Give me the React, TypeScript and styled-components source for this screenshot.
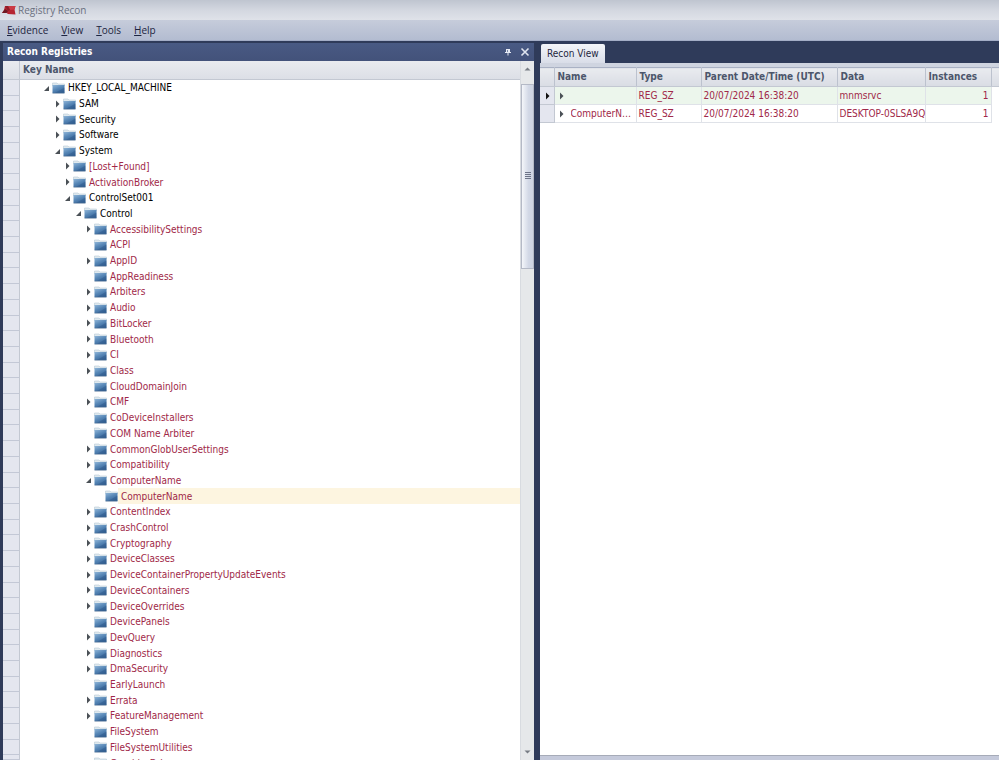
import React, { useState } from "react";
import styled, { createGlobalStyle } from "styled-components";

const uiFont = '"DejaVu Sans Condensed", "DejaVu Sans", sans-serif';
const menuFont = '"Open Sans", "Noto Sans", sans-serif';
const navy = "#2f3b5a";
const crimson = "#a02848";

const GlobalStyle = createGlobalStyle`
  * { box-sizing: border-box; }
  html, body, #root { height: 100%; margin: 0; }
  body { background: ${navy}; font-family: ${uiFont}; font-size: 10px; color: #000; overflow: hidden; }
  button { font: inherit; color: inherit; padding: 0; border: 0; background: none; cursor: pointer; }
`;

const Window = styled.div`
  display: flex;
  flex-direction: column;
  height: 100vh;
`;

const TitleBar = styled.header`
  display: flex;
  align-items: center;
  gap: 2px;
  flex: none;
  height: 20px;
  padding-left: 1px;
  background: linear-gradient(#bfc5d0, #d3d7e0 50%, #dfe2e9);
`;

const AppTitle = styled.h1`
  margin: 0;
  font: 400 10px/16px ${menuFont};
  color: #6b7080;
`;

const MenuBar = styled.nav`
  display: flex;
  align-items: center;
  gap: 13px;
  flex: none;
  height: 21px;
  padding-left: 7px;
  background: linear-gradient(#c6ccdb, #b3bcd1);
  border-bottom: 1px solid #a3adc6;
`;

const MenuButton = styled.button`
  font: 400 10px/16px ${menuFont};
  color: #1d2440;

  &::first-letter { text-decoration: underline; }
`;

const Workspace = styled.main`
  display: grid;
  grid-template-columns: minmax(0, 531fr) minmax(0, 459fr);
  gap: 6px;
  flex: 1;
  min-height: 0;
  padding: 2px 0 0 3px;
`;

const Panel = styled.section`
  display: flex;
  flex-direction: column;
  min-width: 0;
  min-height: 0;
`;

const PanelTitle = styled.div`
  display: flex;
  align-items: center;
  gap: 8px;
  flex: none;
  height: 18px;
  padding: 0 4px;
  background: linear-gradient(#495a84, #43527a);
  color: #fff;
`;

const PanelHeading = styled.h2`
  flex: 1;
  margin: 0;
  font: 700 10px/16px ${uiFont};
`;

const IconButton = styled.button`
  display: flex;
`;

const PanelBody = styled.div`
  display: flex;
  flex: 1;
  min-height: 0;
  background: #fff;
`;

const TreeArea = styled.div`
  display: flex;
  flex-direction: column;
  flex: 1;
  min-width: 0;
`;

const TreeHeader = styled.div`
  display: flex;
  flex: none;
  height: 19px;
  background: linear-gradient(#e9ebef, #dcdfe6);
  border-bottom: 1px solid #c3c8d2;
  color: #4c566b;
  font: 700 10px/18px ${uiFont};
`;

const HeaderCorner = styled.div`
  width: 17px;
  border-right: 1px solid #c3c8d2;
`;

const HeaderLabel = styled.div`
  flex: 1;
  padding-left: 3px;
`;

const TreeList = styled.ul`
  display: flex;
  flex-direction: column;
  flex: 1;
  min-height: 0;
  margin: 0;
  padding: 0;
  list-style: none;
`;

const TreeRow = styled.li<{ $cut?: boolean }>`
  display: flex;
  flex: ${(p) => (p.$cut ? "0 0 5px" : "1 1 0")};
  min-height: 0;
  overflow: ${(p) => (p.$cut ? "hidden" : "visible")};
`;

const RowIndicator = styled.span`
  flex: none;
  width: 17px;
  background: #e4e6ef;
  border-right: 1px solid #c3c8d2;
  border-bottom: 1px solid #c3c8d6;
`;

const RowContent = styled.div<{ $level: number; $cut?: boolean }>`
  display: flex;
  align-items: center;
  flex: 1;
  min-width: 0;
  min-height: ${(p) => (p.$cut ? "16px" : "0")};
  padding-left: ${(p) => 22 + p.$level * 10 + Math.ceil(p.$level / 2)}px;
`;

const Expander = styled.button`
  display: flex;
  flex: none;
  width: 10px;
  height: 10px;
`;

const ExpanderSpace = styled.span`
  flex: none;
  width: 10px;
`;

const KeyButton = styled.button<{ $recovered: boolean }>`
  display: flex;
  align-items: center;
  align-self: stretch;
  flex: 1;
  line-height: 15px;
  text-align: left;
  white-space: nowrap;
  color: ${(p) => (p.$recovered ? crimson : "#000")};
`;

const KeyLabel = styled.span<{ $selected: boolean }>`
  display: flex;
  align-items: center;
  align-self: stretch;
  flex: 1;
  padding-left: 3px;
  background: ${(p) => (p.$selected ? "#fdf5e0" : "transparent")};
`;

const Scrollbar = styled.div`
  display: flex;
  flex-direction: column;
  flex: none;
  width: 14px;
  background: #e6e8ea;
  border-left: 1px solid #d8dbe0;
`;

const ScrollButton = styled.button`
  display: flex;
  align-items: center;
  justify-content: center;
  flex: none;
  height: 16px;
`;

const ScrollTrack = styled.div`
  display: flex;
  flex-direction: column;
  flex: 1;
  padding-top: 7px;
`;

const ScrollThumb = styled.div`
  display: flex;
  align-items: center;
  justify-content: center;
  flex: 0 0 28%;
  background: linear-gradient(90deg, #f4f6fa, #d2d8e6 60%, #cdd3e2);
  border: 1px solid #b4b9c6;
`;

const TabStrip = styled.div`
  display: flex;
  align-items: flex-end;
  flex: none;
  height: 20px;
  padding-left: 1px;
`;

const Tab = styled.button`
  height: 19px;
  padding: 0 6px;
  background: linear-gradient(#f3f5f9, #d9dde8);
  border-radius: 2px 2px 0 0;
  line-height: 19px;
  color: #1f2740;
`;

const TabPage = styled.div`
  flex: 1;
  min-height: 0;
  background: #fff;
  border-top: 4px solid #cfd4e0;
  border-bottom: 4px solid #c5cadb;
`;

const PageBody = styled.div`
  height: 100%;
  border-bottom: 1px solid #a6abb8;
`;

const ValueTable = styled.table`
  width: 100%;
  border-collapse: collapse;
  table-layout: fixed;
  border-top: 1px solid #a9b1c4;
`;

const Column = styled.col<{ $width?: number }>`
  width: ${(p) => (p.$width ? `${p.$width}px` : "auto")};
`;

const HeadCell = styled.th`
  height: 19px;
  padding: 0 3px;
  background: linear-gradient(#e9ebef, #d9dce4);
  border-right: 1px solid #bcc2ce;
  border-bottom: 1px solid #c3c8d2;
  font: 700 10px/16px ${uiFont};
  color: #4c566b;
  text-align: left;
  white-space: nowrap;

  &:last-child { border-right: 0; }
`;

const ValueRow = styled.tr<{ $focused?: boolean }>`
  height: 18px;
  background: ${(p) => (p.$focused ? "#ecf6ec" : "#fff")};
`;

const Cell = styled.td<{ $right?: boolean }>`
  padding: ${(p) => (p.$right ? "0 2px" : "0 0 0 2px")};
  border-right: 1px solid #dfe2e8;
  border-bottom: 1px solid #dfe2e8;
  line-height: 16px;
  color: ${crimson};
  text-align: ${(p) => (p.$right ? "right" : "left")};
  white-space: nowrap;
`;

const MarkerCell = styled.td`
  padding: 0 0 0 3px;
  background: #e4e6ef;
  border-right: 1px solid #c3c8d2;
  border-bottom: 1px solid #c3c8d2;

  svg { display: block; }
`;

const FillerCell = styled.td`
  padding: 0;
  background: #fff;
`;

const NameContent = styled.div`
  display: flex;
  align-items: center;
  gap: 4px;
  padding-right: 4px;
`;

const NameText = styled.span`
  flex: 1;
  min-width: 0;
  overflow: hidden;
  text-overflow: ellipsis;
`;

const Logo = () => (
  <svg width="15" height="12" viewBox="0 0 15 12" aria-hidden="true">
    <path d="M1 9 L3 6 L4 2 L14.500 2 L13.500 5.500 L14.500 10.500 L7 10 L5 8.500 Z" fill="#b52432" />
    <path d="M1 9 L4 5 L7 7 L5.500 9 Z" fill="#6e1822" />
    <path d="M7 2 L14.500 2 L13.500 5.500 L9 6 Z" fill="#cb3a44" />
    <path d="M4 2 L7 2 L9 6 L7 7 Z" fill="#8f1e2a" />
  </svg>
);

const Folder = () => (
  <svg width="13" height="12" viewBox="0 0 13 12" aria-hidden="true">
    <defs>
      <linearGradient id="folderFace" x1="0" y1="0" x2="0.600" y2="1">
        <stop offset="0" stopColor="#8fb5d8" />
        <stop offset="0.550" stopColor="#5585b5" />
        <stop offset="1" stopColor="#3a6799" />
      </linearGradient>
    </defs>
    <path d="M0.500 3 V1 H5 L6 2 H12.500 V4 H0.500 Z" fill="#dfe9ee" stroke="#b9cbd6" strokeWidth="0.600" />
    <rect x="0.500" y="3" width="12" height="8" fill="url(#folderFace)" />
    <path d="M3 11 L12.500 5.500 V11 Z" fill="#244f85" opacity="0.350" />
    <path d="M0.500 11.200 H12.500" stroke="#4d6f93" strokeWidth="0.700" />
  </svg>
);

const ClosedArrow = ({ dark = false }: { dark?: boolean }) => (
  <svg width="10" height="10" viewBox="0 0 10 10" aria-hidden="true">
    <path d="M3 1.500 L6.500 5 L3 8.500 Z" fill={dark ? "#111" : "#4a5056"} />
  </svg>
);

const OpenArrow = () => (
  <svg width="10" height="10" viewBox="0 0 10 10" aria-hidden="true">
    <path d="M7 3 V8 H2 Z" fill="#4a5056" />
  </svg>
);

const Pin = () => (
  <svg width="8" height="8" viewBox="0 0 8 8" aria-hidden="true">
    <path d="M2 1 H6 V4 H7 V5 H1 V4 H2 Z M3.500 5 H4.500 V7.500 H3.500 Z" fill="#e6eaf4" />
    <path d="M3 2 H4 V4 H3 Z" fill="#7c89a8" />
  </svg>
);

const Close = () => (
  <svg width="10" height="10" viewBox="0 0 10 10" aria-hidden="true">
    <path d="M1.500 1.500 L8.500 8.500 M8.500 1.500 L1.500 8.500" stroke="#dfe4ef" strokeWidth="1.600" />
  </svg>
);

const ScrollArrow = ({ up = false }: { up?: boolean }) => (
  <svg width="7" height="4" viewBox="0 0 7 4" aria-hidden="true">
    <path d={up ? "M0.500 3.500 L3.500 0.500 L6.500 3.500 Z" : "M0.500 0.500 L3.500 3.500 L6.500 0.500 Z"} fill="#777c84" />
  </svg>
);

const Grip = () => (
  <svg width="6" height="8" viewBox="0 0 6 8" shapeRendering="crispEdges" aria-hidden="true">
    <path d="M0 0 H6 V1 H0 Z M0 2 H6 V3 H0 Z M0 4 H6 V5 H0 Z M0 6 H6 V7 H0 Z" fill="#6d7488" />
  </svg>
);

type Key = { name: string; level: number; state: "open" | "closed" | "leaf"; live?: boolean };

const parseKeys = (level: number, names: string): Key[] =>
  names.split(" | ").map((entry) => ({
    name: entry.replace(/^[-.]/, ""),
    level,
    state: entry[0] === "-" ? "open" : entry[0] === "." ? "leaf" : "closed",
  }));

const keys: Key[] = [
  { name: "HKEY_LOCAL_MACHINE", level: 0, state: "open", live: true },
  { name: "SAM", level: 1, state: "closed", live: true },
  { name: "Security", level: 1, state: "closed", live: true },
  { name: "Software", level: 1, state: "closed", live: true },
  { name: "System", level: 1, state: "open", live: true },
  { name: "[Lost+Found]", level: 2, state: "closed" },
  { name: "ActivationBroker", level: 2, state: "closed" },
  { name: "ControlSet001", level: 2, state: "open", live: true },
  { name: "Control", level: 3, state: "open", live: true },
  ...parseKeys(
    4,
    "AccessibilitySettings | .ACPI | AppID | .AppReadiness | Arbiters | Audio | BitLocker | Bluetooth | CI | Class | .CloudDomainJoin | CMF | .CoDeviceInstallers | .COM Name Arbiter | CommonGlobUserSettings | Compatibility | -ComputerName",
  ),
  { name: "ComputerName", level: 5, state: "leaf" },
  ...parseKeys(
    4,
    "ContentIndex | CrashControl | Cryptography | DeviceClasses | DeviceContainerPropertyUpdateEvents | DeviceContainers | DeviceOverrides | .DevicePanels | DevQuery | Diagnostics | DmaSecurity | .EarlyLaunch | Errata | FeatureManagement | .FileSystem | .FileSystemUtilities | .GraphicsDrivers",
  ),
];

const values = [
  { name: "", type: "REG_SZ", date: "20/07/2024 16:38:20", data: "mnmsrvc", instances: 1 },
  { name: "ComputerName", type: "REG_SZ", date: "20/07/2024 16:38:20", data: "DESKTOP-0SLSA9Q", instances: 1 },
];

export default function App() {
  const [selected, setSelected] = useState(26);

  return (
    <Window>
      <GlobalStyle />
      <TitleBar>
        <Logo />
        <AppTitle>Registry Recon</AppTitle>
      </TitleBar>
      <MenuBar aria-label="Main menu">
        {["Evidence", "View", "Tools", "Help"].map((item) => (
          <MenuButton key={item}>{item}</MenuButton>
        ))}
      </MenuBar>
      <Workspace>
        <Panel aria-label="Recon Registries">
          <PanelTitle>
            <PanelHeading>Recon Registries</PanelHeading>
            <IconButton aria-label="Auto hide"><Pin /></IconButton>
            <IconButton aria-label="Close"><Close /></IconButton>
          </PanelTitle>
          <PanelBody>
            <TreeArea>
              <TreeHeader>
                <HeaderCorner />
                <HeaderLabel>Key Name</HeaderLabel>
              </TreeHeader>
              <TreeList>
                {keys.map((key, index) => {
                  const cut = index === keys.length - 1;
                  return (
                    <TreeRow key={index} $cut={cut}>
                      <RowIndicator />
                      <RowContent $level={key.level} $cut={cut}>
                        {key.state === "leaf" ? (
                          <ExpanderSpace />
                        ) : (
                          <Expander aria-label={`Toggle ${key.name}`}>
                            {key.state === "open" ? <OpenArrow /> : <ClosedArrow />}
                          </Expander>
                        )}
                        <KeyButton $recovered={!key.live} onClick={() => setSelected(index)}>
                          <Folder />
                          <KeyLabel $selected={index === selected}>{key.name}</KeyLabel>
                        </KeyButton>
                      </RowContent>
                    </TreeRow>
                  );
                })}
              </TreeList>
            </TreeArea>
            <Scrollbar>
              <ScrollButton aria-label="Scroll up"><ScrollArrow up /></ScrollButton>
              <ScrollTrack>
                <ScrollThumb><Grip /></ScrollThumb>
              </ScrollTrack>
              <ScrollButton aria-label="Scroll down"><ScrollArrow /></ScrollButton>
            </Scrollbar>
          </PanelBody>
        </Panel>
        <Panel aria-label="Recon View">
          <TabStrip role="tablist">
            <Tab role="tab" aria-selected="true">Recon View</Tab>
          </TabStrip>
          <TabPage role="tabpanel">
            <PageBody>
              <ValueTable>
                <colgroup>
                  <Column $width={14} />
                  <Column $width={82} />
                  <Column $width={65} />
                  <Column $width={136} />
                  <Column $width={88} />
                  <Column $width={66} />
                  <Column />
                </colgroup>
                <thead>
                  <tr>
                    <HeadCell aria-label="Row marker" />
                    <HeadCell>Name</HeadCell>
                    <HeadCell>Type</HeadCell>
                    <HeadCell>Parent Date/Time (UTC)</HeadCell>
                    <HeadCell>Data</HeadCell>
                    <HeadCell>Instances</HeadCell>
                    <HeadCell aria-label="Empty" />
                  </tr>
                </thead>
                <tbody>
                  {values.map((value, index) => (
                    <ValueRow key={index} $focused={index === 0}>
                      <MarkerCell>{index === 0 && <ClosedArrow dark />}</MarkerCell>
                      <Cell>
                        <NameContent>
                          <Expander aria-label="Expand value"><ClosedArrow /></Expander>
                          <NameText>{value.name}</NameText>
                        </NameContent>
                      </Cell>
                      <Cell>{value.type}</Cell>
                      <Cell>{value.date}</Cell>
                      <Cell>{value.data}</Cell>
                      <Cell $right>{value.instances}</Cell>
                      <FillerCell />
                    </ValueRow>
                  ))}
                </tbody>
              </ValueTable>
            </PageBody>
          </TabPage>
        </Panel>
      </Workspace>
    </Window>
  );
}
